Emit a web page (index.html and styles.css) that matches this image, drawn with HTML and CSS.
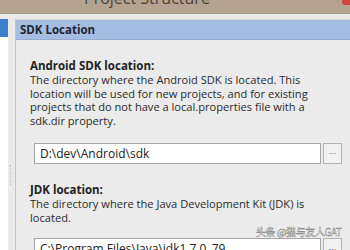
FILE: index.html
```html
<!DOCTYPE html>
<html lang="en">
<head>
  <meta charset="UTF-8" />
  <title>Project Structure</title>
  <link rel="stylesheet" href="styles.css">
</head>
<body>

  <div class="titlebar">
    <span class="title">Project Structure</span>
    <span class="close"></span>
  </div>

  <div class="window">
    <div class="sidebar">
      <div class="sidebar-item selected"></div>
    </div>
    <div class="splitter"><span class="grip"></span></div>

    <div class="panel">
      <div class="panel-header">SDK Location</div>

      <div class="panel-body">
        <div class="field android">
          <div class="field-label">Android SDK location:</div>
          <div class="field-desc">The directory where the Android SDK is located. This location will be used for new projects, and for existing projects that do not have a local.properties file with a sdk.dir property.</div>
          <div class="path-row">
            <input class="path-input" type="text" value="D:\dev\Android\sdk" />
            <button class="browse">...</button>
          </div>
        </div>

        <div class="field jdk">
          <div class="field-label">JDK location:</div>
          <div class="field-desc">The directory where the Java Development Kit (JDK) is located.</div>
          <div class="path-row">
            <input class="path-input" type="text" value="C:\Program Files\Java\jdk1.7.0_79" />
            <button class="browse">...</button>
          </div>
        </div>
      </div>
    </div>
  </div>

  <div class="watermark">头条 @猫与友人GAT</div>

</body>
</html>
```

FILE: styles.css
```css
body {
  margin: 0;
  width: 350px;
  height: 250px;
  overflow: hidden;
  background: #ebe9e9;
  font-family: "Open Sans", Arial, sans-serif;
  color: #222;
  position: relative;
}
.titlebar {
  height: 13px;
  background: #b4a48f;
  display: flex;
  justify-content: space-between;
  align-items: flex-end;
  overflow: hidden;
  border-bottom: 1px solid #a99a88;
}
.title {
  margin-left: 84px;
  font-size: 16px;
  line-height: 16px;
  margin-bottom: 7px;
  color: #4a413b;
}
.close {
  align-self: flex-start;
  width: 8px;
  height: 5px;
  background: #c9473f;
  border-bottom-left-radius: 3px;
}
.window {
  display: flex;
  padding-top: 5px;
  height: 231px;
}
.sidebar {
  width: 8px;
  background: #fff;
}
.sidebar-item.selected {
  height: 18px;
  background: #3d7fcc;
}
.splitter {
  width: 7px;
  display: flex;
  align-items: center;
  justify-content: center;
}
.grip {
  width: 2px;
  height: 20px;
  margin-top: 80px;
  border-left: 1px dotted #b7b7b7;
}
.panel {
  flex: 1;
  background: #ebebeb;
  border-left: 1px solid #c2c2c2;
  border-top: 1px solid #d6d6d6;
}
.panel-header {
  height: 19px;
  line-height: 19px;
  background: #a5bde1;
  border-bottom: 1px solid #95acd0;
  padding-left: 4px;
  font-weight: bold;
  font-size: 11.5px;
  color: #1f2530;
}
.panel-body {
  padding: 0 8px 0 14px;
}
.field-label {
  font-weight: bold;
  font-size: 11.5px;
  line-height: 14px;
}
.field-desc {
  max-width: 291px;
  font-size: 11.1px;
  line-height: 13.7px;
  color: #2a2a2a;
}
.android {
  padding-top: 19px;
}
.android .path-row {
  margin-top: 15px;
}
.jdk {
  padding-top: 19px;
}
.jdk .path-row {
  margin-top: 14px;
}
.path-row {
  display: flex;
  gap: 2px;
  padding-left: 4px;
}
.path-input {
  box-sizing: border-box;
  width: 287px;
  height: 21px;
  margin: 0;
  padding: 0 5px;
  border: 1px solid #a7a7a7;
  background: #fff;
  font-family: "Open Sans", Arial, sans-serif;
  font-size: 12px;
  color: #222;
  outline: none;
}
.browse {
  box-sizing: border-box;
  width: 19px;
  height: 21px;
  margin: 0;
  padding: 0 0 4px;
  border: 1px solid #b3b3b3;
  background: #f2f2f2;
  color: #777;
  font-size: 9px;
  line-height: 10px;
}
.watermark {
  position: absolute;
  left: 256px;
  top: 224px;
  font-family: "Noto Sans CJK SC", sans-serif;
  font-size: 10px;
  color: #fff;
  -webkit-text-stroke: 0.4px #777;
  letter-spacing: -0.4px;
}
```
